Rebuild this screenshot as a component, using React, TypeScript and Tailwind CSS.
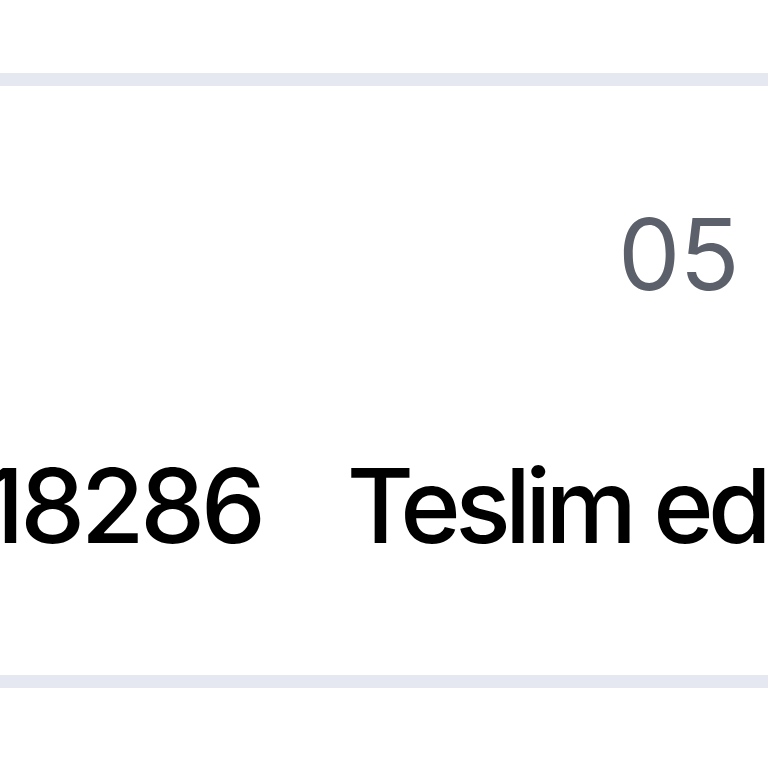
import React from 'react';

export default function App() {
  return (
    <div className="w-[768px] h-[768px] overflow-hidden bg-white flex flex-col" style={{ fontFamily: 'Inter, "Noto Sans", sans-serif' }}>
      <div className="h-[73px] shrink-0" />
      <div className="h-[13px] shrink-0 bg-[#e5e7f1]" />
      <div className="h-[589px] shrink-0 flex flex-col">
        <div className="h-[119px] shrink-0" />
        <div className="flex whitespace-nowrap leading-none">
          <div className="ml-[618px] text-[99px] text-[#5c606b] tracking-[-0.01em]">05 Mar</div>
        </div>
        <div className="h-[150px] shrink-0" />
        <div className="flex whitespace-nowrap leading-none text-black">
          <div className="ml-[-57px] text-[103px] font-medium tracking-[-0.04em]">118286</div>
          <div className="ml-[85px] text-[103px] font-medium tracking-[-0.055em]">Teslim edildi</div>
        </div>
      </div>
      <div className="h-[13px] shrink-0 bg-[#e5e7f1]" />
      <div className="flex-1" />
    </div>
  );
}
